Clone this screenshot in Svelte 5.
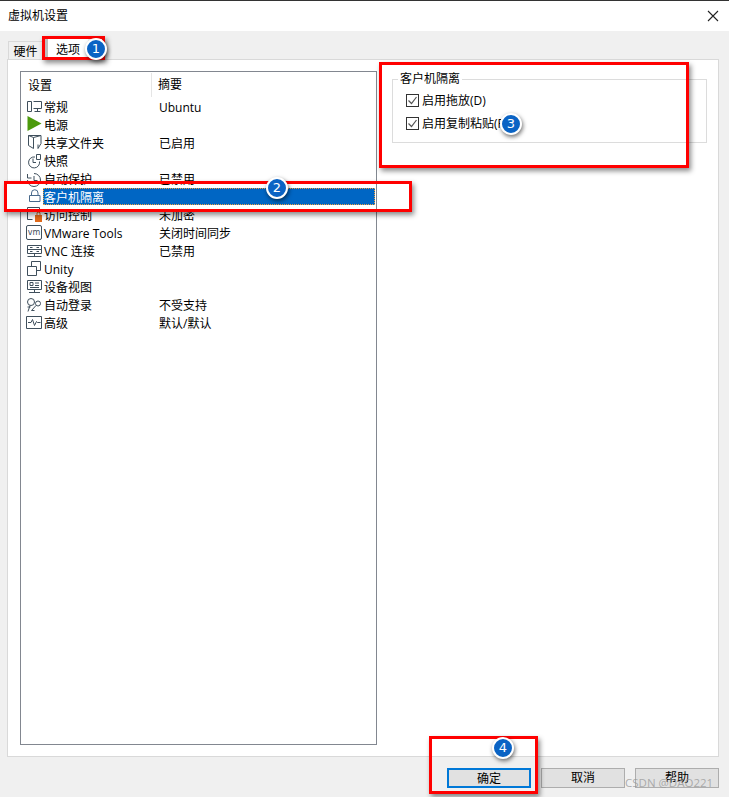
<script>
  const rows = [
    { name: '常规', summary: 'Ubuntu', d: 'M3.500 3.500h4v10h-4zM9.500 3.500h8v7h-8M10.500 13.500h6M13.500 10.500v3' },
    { name: '电源', summary: '', fill: 'M3.500 0L17.500 7.500L3.500 15z', color: '#4c9a0c' },
    { name: '共享文件夹', summary: '已启用', d: 'M4.500 1.500h12.500v8l-3 5v-4M4.500 1.500v10l5 3V3.500zM9.500 3.500l7.500-2' },
    { name: '快照', summary: '', d: 'M11 5a5.500 5.500 0 1 0 4.500 4.500M9 6.500v4h3M12.500 2.500h4v5h-4z' },
    { name: '自动保护', summary: '已禁用', d: 'M10 3.500a6.500 6.500 0 1 1-6.500 6.500M10 6v4.500h3.500M3.500 4v4h4' },
    { name: '客户机隔离', summary: '', d: 'M5.500 7.500h10.500v6h-10.500zM7.500 7.500V5a3.250 3.250 0 0 1 6.500 0v2.500', tone: '#4a6a8c', selected: true },
    { name: '访问控制', summary: '未加密', d: 'M3.500 1.500h12v5M3.500 1.500v12h5', fill: 'M11 9h7v7h-7zM12.500 9V7.500a2 2 0 0 1 4 0V9h-1V7.500a1 1 0 0 0-2 0V9z', color: '#e06a1b' },
    { name: 'VMware Tools', summary: '关闭时间同步', d: 'M4 1.500h12a1.500 1.500 0 0 1 1.500 1.500v11a1.500 1.500 0 0 1-1.500 1.500h-12a1.500 1.500 0 0 1-1.500-1.500v-11a1.500 1.500 0 0 1 1.500-1.500z', label: 'vm' },
    { name: 'VNC 连接', summary: '已禁用', d: 'M3.500 3.500h14v8h-14zM3.500 7.500h14M3.500 14.500h14M10.500 11.500v3M6 5.500h2.500M12.500 5.500h2.500M6 9.500h2.500M12.500 9.500h2.500' },
    { name: 'Unity', summary: '', d: 'M3.500 6.500h9v9h-9zM7.500 6.500v-5h9v9h-4' },
    { name: '设备视图', summary: '', d: 'M3.500 2.500h14v9h-14zM5 14.500h11M10.500 11.500v3M6 4.500h3v3h-3zM11 5h4M11 7.500h4M6 9.500h9' },
    { name: '自动登录', summary: '不受支持', d: 'M10.500 6a3.500 3.500 0 1 0-7 0 3.500 3.500 0 0 0 7 0zM4 15.500l2-6M3.500 11h3M14 10a2.500 2.500 0 1 0 0-5 2.500 2.500 0 0 0 0 5zM12 9.500l-4.500 5h3' },
    { name: '高级', summary: '默认/默认', d: 'M2.500 2.500h15v12h-15zM4 8.500h3l1.500-3 2 6 2-4 1 1h3' }
  ];
  const marks = [
    { n: 1, cls: 'b1' },
    { n: 2, cls: 'b2' },
    { n: 3, cls: 'b3' },
    { n: 4, cls: 'b4' }
  ];
</script>

<div class="win">
  <header class="title">
    <span>虚拟机设置</span>
    <svg class="close" width="12" height="12" viewBox="0 0 12 12"><path d="M1 1l10 10M11 1L1 11" /></svg>
  </header>

  <div class="tabs">
    <div class="tab">硬件</div>
    <div class="tab active">选项</div>
  </div>

  <main class="panel">
    <section class="list">
      <div class="head">
        <span class="h1">设置</span>
        <span class="h2">摘要</span>
      </div>
      {#each rows as r}
        <div class="row">
          <svg class="ico" width="20" height="18" viewBox="0 0 20 18">
            {#if r.d}<path class="line" d={r.d} stroke={r.tone || '#3f4f5c'} />{/if}
            {#if r.fill}<path d={r.fill} fill={r.color} />{/if}
            {#if r.label}<text x="10" y="11" class="vm">{r.label}</text>{/if}
          </svg>
          <span class="name" class:sel={r.selected}>{r.name}</span>
          {#if r.selected}
            <span class="selbar"></span>
          {:else}
            <span class="sum">{r.summary}</span>
          {/if}
        </div>
      {/each}
    </section>

    <section class="side">
      <fieldset class="group">
        <legend>客户机隔离</legend>
        <label class="check"><span class="box"><svg width="11" height="11" viewBox="0 0 11 11"><path d="M1.500 5.500l3 3 5-6.500" /></svg></span>启用拖放(D)</label>
        <label class="check"><span class="box"><svg width="11" height="11" viewBox="0 0 11 11"><path d="M1.500 5.500l3 3 5-6.500" /></svg></span>启用复制粘贴(P)</label>
      </fieldset>
    </section>
  </main>

  <footer class="foot">
    <button class="btn primary">确定</button>
    <button class="btn">取消</button>
    <button class="btn">帮助</button>
  </footer>

  <div class="red r1"></div>
  <div class="red r2"></div>
  <div class="red r3"></div>
  <div class="red r4"></div>
  {#each marks as m}
    <div class="badge {m.cls}">{m.n}</div>
  {/each}
  <div class="wm">CSDN @DAO221</div>
</div>

<style>
  :global(body) {
    margin: 0;
    background: #f0f0f0;
  }
  .win {
    position: relative;
    width: 729px;
    height: 797px;
    overflow: hidden;
    display: flex;
    flex-direction: column;
    background: #f0f0f0;
    color: #000;
    font: 12px/18px "Open Sans", "Noto Sans CJK SC", sans-serif;
  }
  .title {
    height: 30px;
    flex: none;
    border-top: 1px solid #333;
    background: #fff;
    display: flex;
    align-items: center;
    justify-content: space-between;
    padding: 0 10px 0 8px;
  }
  .close path {
    stroke: #222;
    fill: none;
    stroke-width: 1.1;
  }
  .tabs {
    flex: none;
    height: 28px;
    display: flex;
    align-items: flex-end;
    padding-left: 8px;
  }
  .tab {
    height: 18px;
    width: 35px;
    text-align: center;
    border: 1px solid #d9d9d9;
    border-bottom: none;
    box-sizing: border-box;
    line-height: 20px;
  }
  .tab.active {
    height: 21px;
    width: 43px;
    margin-left: 2px;
    background: #fff;
    border: none;
    border-left: 3px solid #bdbdbd;
    line-height: 23px;
  }
  .panel {
    flex: none;
    height: 698px;
    margin: 0 10px 0 7px;
    box-sizing: border-box;
    border: 1px solid #d9d9d9;
    background: #fff;
    padding: 11px 11px 11px 12px;
    display: flex;
  }
  .list {
    width: 357px;
    flex: none;
    box-sizing: border-box;
    border: 1px solid #828790;
  }
  .head {
    height: 26px;
    display: flex;
    align-items: center;
  }
  .h1 {
    width: 131px;
    padding-left: 7px;
    box-sizing: border-box;
    height: 24px;
    line-height: 26px;
    border-right: 1px solid #e5e5e5;
  }
  .h2 {
    padding-left: 6px;
    line-height: 26px;
  }
  .row {
    height: 18px;
    display: flex;
    align-items: center;
    padding-left: 3px;
    position: relative;
  }
  .ico {
    flex: none;
    display: block;
  }
  .line {
    fill: none;
    stroke-width: 1;
  }
  .vm {
    font: 8px "DejaVu Sans", sans-serif;
    text-anchor: middle;
    fill: #3d4d5c;
  }
  .name {
    width: 115px;
    flex: none;
    line-height: 19px;
    white-space: nowrap;
  }
  .name.sel {
    color: #fff;
    position: relative;
    z-index: 1;
  }
  .sum {
    line-height: 19px;
  }
  .selbar {
    position: absolute;
    left: 22px;
    right: 1px;
    top: 0;
    bottom: 1px;
    background: #0066c4;
    outline: 1px dotted #f0a040;
    outline-offset: -1px;
  }
  .side {
    flex: 1;
    padding: 1px 0 0 15px;
  }
  .group {
    margin: 0;
    padding: 3px 0 0 13px;
    height: 71px;
    box-sizing: border-box;
    border: 1px solid #dcdcdc;
  }
  legend {
    padding: 0 2px;
    margin-left: -8px;
    line-height: 14px;
  }
  .check {
    display: flex;
    align-items: center;
    height: 23px;
    gap: 3px;
  }
  .box {
    width: 13px;
    height: 13px;
    box-sizing: border-box;
    border: 1px solid #333;
    display: flex;
    align-items: center;
    justify-content: center;
  }
  .box path {
    fill: none;
    stroke: #555;
    stroke-width: 1.2;
  }
  .foot {
    flex: 1;
    display: flex;
    justify-content: flex-end;
    gap: 10px;
    padding: 11px 10px 0 0;
  }
  .btn {
    width: 84px;
    height: 20px;
    padding: 0;
    border: 1px solid #adadad;
    background: #e1e1e1;
    color: #000;
    font: inherit;
    line-height: 18px;
  }
  .btn.primary {
    border: 2px solid #0078d7;
  }
  .red {
    position: absolute;
    box-sizing: border-box;
    border: 3px solid #f00;
    box-shadow: 2px 3px 5px rgba(0, 0, 0, 0.45);
  }
  .r1 { left: 42px; top: 36px; width: 63px; height: 24px; }
  .r2 {
    left: 4px;
    top: 181px;
    width: 408px;
    height: 31px;
    background: linear-gradient(#fff, #fff) left / 20px 100% no-repeat;
  }
  .r3 { left: 379px; top: 62px; width: 310px; height: 106px; }
  .r4 { left: 429px; top: 736px; width: 109px; height: 58px; }
  .badge {
    position: absolute;
    width: 18px;
    height: 18px;
    border: 2.5px solid #fff;
    border-radius: 50%;
    background: #0a63c4;
    color: #fff;
    font: 13px/18px "DejaVu Sans", sans-serif;
    text-align: center;
    box-shadow: 1px 2px 4px rgba(0, 0, 0, 0.55);
  }
  .b1 { left: 85px; top: 38px; }
  .b2 { left: 266px; top: 177px; }
  .b3 { left: 500px; top: 113px; }
  .b4 { left: 492px; top: 737px; }
  .wm {
    position: absolute;
    left: 625px;
    top: 775px;
    font-size: 11.5px;
    line-height: 16px;
    color: rgba(150, 150, 150, 0.75);
    white-space: nowrap;
  }
</style>
